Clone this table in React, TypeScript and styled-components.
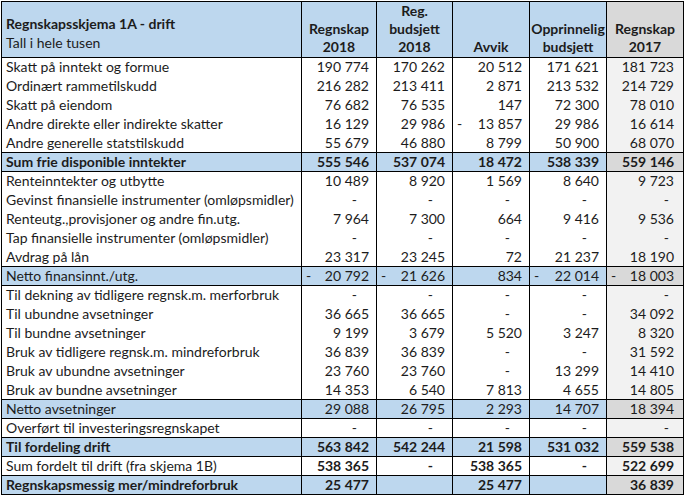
import React from "react";
import styled, { createGlobalStyle } from "styled-components";

const GlobalStyle = createGlobalStyle`
  html, body { margin: 0; padding: 0; background: #ffffff; }
  body { font-family: Lato, "Liberation Sans", sans-serif; }
`;

type Kind = "plain" | "sum" | "sumBold" | "boldNums";

interface RowData {
  label: string;
  values: string[];
  kind: Kind;
}

const D = "-";

const rows: RowData[] = [
  { label: "Skatt på inntekt og formue", values: ["190 774", "170 262", "20 512", "171 621", "181 723"], kind: "plain" },
  { label: "Ordinært rammetilskudd", values: ["216 282", "213 411", "2 871", "213 532", "214 729"], kind: "plain" },
  { label: "Skatt på eiendom", values: ["76 682", "76 535", "147", "72 300", "78 010"], kind: "plain" },
  { label: "Andre direkte eller indirekte skatter", values: ["16 129", "29 986", "-13 857", "29 986", "16 614"], kind: "plain" },
  { label: "Andre generelle statstilskudd", values: ["55 679", "46 880", "8 799", "50 900", "68 070"], kind: "plain" },
  { label: "Sum frie disponible inntekter", values: ["555 546", "537 074", "18 472", "538 339", "559 146"], kind: "sumBold" },
  { label: "Renteinntekter og utbytte", values: ["10 489", "8 920", "1 569", "8 640", "9 723"], kind: "plain" },
  { label: "Gevinst finansielle instrumenter (omløpsmidler)", values: [D, D, D, D, D], kind: "plain" },
  { label: "Renteutg.,provisjoner og andre fin.utg.", values: ["7 964", "7 300", "664", "9 416", "9 536"], kind: "plain" },
  { label: "Tap finansielle instrumenter (omløpsmidler)", values: [D, D, D, D, D], kind: "plain" },
  { label: "Avdrag på lån", values: ["23 317", "23 245", "72", "21 237", "18 190"], kind: "plain" },
  { label: "Netto finansinnt./utg.", values: ["-20 792", "-21 626", "834", "-22 014", "-18 003"], kind: "sum" },
  { label: "Til dekning av tidligere regnsk.m. merforbruk", values: [D, D, D, D, D], kind: "plain" },
  { label: "Til ubundne avsetninger", values: ["36 665", "36 665", D, D, "34 092"], kind: "plain" },
  { label: "Til bundne avsetninger", values: ["9 199", "3 679", "5 520", "3 247", "8 320"], kind: "plain" },
  { label: "Bruk av tidligere regnsk.m. mindreforbruk", values: ["36 839", "36 839", D, D, "31 592"], kind: "plain" },
  { label: "Bruk av ubundne avsetninger", values: ["23 760", "23 760", D, "13 299", "14 410"], kind: "plain" },
  { label: "Bruk av bundne avsetninger", values: ["14 353", "6 540", "7 813", "4 655", "14 805"], kind: "plain" },
  { label: "Netto avsetninger", values: ["29 088", "26 795", "2 293", "14 707", "18 394"], kind: "sum" },
  { label: "Overført til investeringsregnskapet", values: [D, D, D, D, D], kind: "plain" },
  { label: "Til fordeling drift", values: ["563 842", "542 244", "21 598", "531 032", "559 538"], kind: "sumBold" },
  { label: "Sum fordelt til drift (fra skjema 1B)", values: ["538 365", D, "538 365", D, "522 699"], kind: "boldNums" },
  { label: "Regnskapsmessig mer/mindreforbruk", values: ["25 477", "", "25 477", "", "36 839"], kind: "sumBold" },
];

const BLUE = "#bdd7ee";
const GRAY = "#d9d9d9";
const LIGHT = "#f2f2f2";
const LINE = "#000000";

const Page = styled.div`
  padding: 1px 0 0 1px;
`;

const Sheet = styled.table`
  border-collapse: collapse;
  table-layout: fixed;
  width: 682px;
  font-family: Lato, "Liberation Sans", sans-serif;
  font-size: 14px;
  color: #1c1c1c;
  border: 1px solid ${LINE};
`;

const HeadLabel = styled.th`
  background: ${BLUE};
  border: 1px solid ${LINE};
  height: 50px;
  padding: 0 0 5px 4px;
  text-align: left;
  vertical-align: bottom;
  line-height: 19px;
`;

const Title = styled.div`
  font-weight: 700;
`;

const Sub = styled.div`
  font-weight: 400;
`;

const HeadCell = styled.th<{ $gray?: boolean }>`
  background: ${(p) => (p.$gray ? GRAY : BLUE)};
  border: 1px solid ${LINE};
  padding: 0 0 1px;
  text-align: center;
  vertical-align: bottom;
  font-weight: 700;
  line-height: 18px;
`;

const Row = styled.tr`
  height: 19px;
`;

const LabelCell = styled.td<{ $sum: boolean; $bold: boolean }>`
  background: ${(p) => (p.$sum ? BLUE : "#ffffff")};
  font-weight: ${(p) => (p.$bold ? 700 : 400)};
  border-left: 1px solid ${LINE};
  border-right: 1px solid ${LINE};
  ${(p) => (p.$sum ? `border-top: 1px solid ${LINE}; border-bottom: 1px solid ${LINE};` : "")}
  padding: 0 0 0 4px;
  line-height: 18px;
  white-space: nowrap;
  overflow: hidden;
`;

const NumCell = styled.td<{ $bg: string; $bold: boolean; $sum: boolean }>`
  background: ${(p) => p.$bg};
  font-weight: ${(p) => (p.$bold ? 700 : 400)};
  border-left: 1px solid ${LINE};
  border-right: 1px solid ${LINE};
  ${(p) => (p.$sum ? `border-top: 1px solid ${LINE}; border-bottom: 1px solid ${LINE};` : "")}
  padding: 0;
  line-height: 18px;
  white-space: nowrap;
`;

const NumWrap = styled.div<{ $last: boolean }>`
  display: flex;
  justify-content: space-between;
  align-items: center;
  padding: 0 ${(p) => (p.$last ? 9 : 7)}px 0 4px;
`;

const Minus = styled.span``;

const Value = styled.span<{ $dash: boolean; $last: boolean }>`
  margin-left: auto;
  padding-right: ${(p) => (p.$dash ? (p.$last ? 5 : 12) : 0)}px;
`;

function cellBg(kind: Kind, col: number): string {
  const sum = kind === "sum" || kind === "sumBold";
  if (col === 4) return sum ? GRAY : LIGHT;
  return sum ? BLUE : "#ffffff";
}

export default function App() {
  return (
    <>
      <GlobalStyle />
      <Page>
        <Sheet>
          <colgroup>
            <col style={{ width: 300 }} />
            <col style={{ width: 75 }} />
            <col style={{ width: 76 }} />
            <col style={{ width: 77 }} />
            <col style={{ width: 77 }} />
            <col style={{ width: 77 }} />
          </colgroup>
          <thead>
            <tr>
              <HeadLabel>
                <Title>Regnskapsskjema 1A - drift</Title>
                <Sub>Tall i hele tusen</Sub>
              </HeadLabel>
              <HeadCell>
                Regnskap
                <br />
                2018
              </HeadCell>
              <HeadCell>
                Reg.
                <br />
                budsjett
                <br />
                2018
              </HeadCell>
              <HeadCell>Avvik</HeadCell>
              <HeadCell>
                Opprinnelig
                <br />
                budsjett
              </HeadCell>
              <HeadCell $gray>
                Regnskap
                <br />
                2017
              </HeadCell>
            </tr>
          </thead>
          <tbody>
            {rows.map((r) => {
              const sum = r.kind === "sum" || r.kind === "sumBold";
              const labelBold = r.kind === "sumBold";
              const numBold = r.kind === "sumBold" || r.kind === "boldNums";
              return (
                <Row key={r.label}>
                  <LabelCell $sum={sum} $bold={labelBold}>
                    {r.label}
                  </LabelCell>
                  {r.values.map((v, i) => {
                    const neg = v.startsWith("-") && v.length > 1;
                    const dash = v === D;
                    const text = neg ? v.slice(1) : v;
                    return (
                      <NumCell key={i} $bg={cellBg(r.kind, i)} $bold={numBold} $sum={sum}>
                        <NumWrap $last={i === 4}>
                          {neg && <Minus>-</Minus>}
                          <Value $dash={dash} $last={i === 4}>
                            {text || "\u00a0"}
                          </Value>
                        </NumWrap>
                      </NumCell>
                    );
                  })}
                </Row>
              );
            })}
          </tbody>
        </Sheet>
      </Page>
    </>
  );
}
